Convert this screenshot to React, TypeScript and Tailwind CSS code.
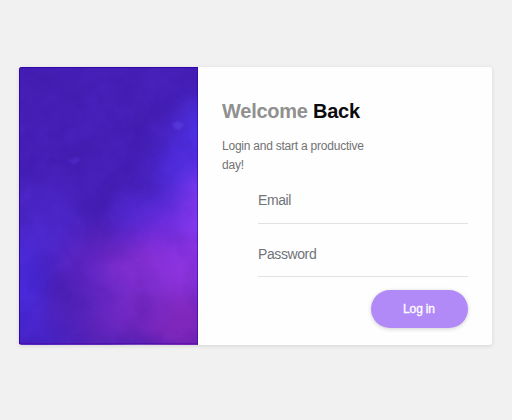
import React from "react";

function Artwork() {
  return (
    <svg className="block h-full w-full" viewBox="0 0 179 278" preserveAspectRatio="none" aria-hidden="true">
      <defs>
        <filter id="soft" x="-80%" y="-80%" width="260%" height="260%" colorInterpolationFilters="sRGB">
          <feGaussianBlur stdDeviation="13" />
        </filter>
        <filter id="small" x="-60%" y="-60%" width="220%" height="220%" colorInterpolationFilters="sRGB">
          <feGaussianBlur stdDeviation="1.3" />
        </filter>
        <filter id="dark" x="0" y="0" width="100%" height="100%" colorInterpolationFilters="sRGB">
          <feTurbulence type="fractalNoise" baseFrequency="0.03" numOctaves="5" seed="8" />
          <feColorMatrix values="0 0 0 0 0.14  0 0 0 0 0.05  0 0 0 0 0.45  2 0 0 0 -0.85" />
        </filter>
        <filter id="light" x="0" y="0" width="100%" height="100%" colorInterpolationFilters="sRGB">
          <feTurbulence type="fractalNoise" baseFrequency="0.035" numOctaves="5" seed="21" />
          <feColorMatrix values="0 0 0 0 0.42  0 0 0 0 0.25  0 0 0 0 0.95  0 2 0 0 -0.85" />
        </filter>
      </defs>
      <rect width="179" height="278" fill="#461fb7" />
      <g filter="url(#soft)">
        <ellipse cx="182" cy="68" rx="24" ry="34" fill="#4c32e2" />
        <ellipse cx="167" cy="98" rx="30" ry="30" fill="#512fe2" />
        <ellipse cx="20" cy="160" rx="35" ry="40" fill="#4e28cc" />
        <ellipse cx="85" cy="205" rx="42" ry="42" fill="#6025c2" />
        <ellipse cx="135" cy="148" rx="38" ry="20" fill="#552bd8" />
        <ellipse cx="152" cy="172" rx="34" ry="25" fill="#752de0" />
        <ellipse cx="190" cy="142" rx="28" ry="40" fill="#873bf0" />
        <ellipse cx="130" cy="202" rx="44" ry="30" fill="#8630d4" />
        <ellipse cx="176" cy="205" rx="34" ry="34" fill="#8e34e0" />
        <ellipse cx="2" cy="222" rx="22" ry="46" fill="#482bdc" />
        <ellipse cx="54" cy="248" rx="28" ry="30" fill="#5122b8" />
        <ellipse cx="125" cy="250" rx="50" ry="26" fill="#7228c0" />
        <ellipse cx="168" cy="262" rx="40" ry="34" fill="#7f27bb" />
        <ellipse cx="20" cy="276" rx="38" ry="18" fill="#4824c8" />
        <ellipse cx="80" cy="280" rx="28" ry="14" fill="#5822b4" />
      </g>
      <rect width="179" height="278" filter="url(#dark)" opacity="0.14" />
      <rect width="179" height="278" filter="url(#light)" opacity="0.13" />
      <path d="M153 57l6-3 6 4-5 5-5-2z" fill="#6550f0" opacity=".4" filter="url(#small)" />
      <path d="M48 94l10-4 3 3-6 5z" fill="#5c32dc" opacity=".4" filter="url(#small)" />
      <path d="M.5 0v278M0 .5h179" stroke="#3008a8" strokeWidth="1" fill="none" />
      <path d="M0 277.2h179" stroke="#4c00a5" strokeWidth="1" opacity=".65" />
      <path d="M178.5 0v278" stroke="#2600a5" strokeWidth="1" />
    </svg>
  );
}

function Field({ label, type }: { label: string; type: string }) {
  return (
    <input
      type={type}
      placeholder={label}
      aria-label={label}
      className="block h-[39px] w-full rounded-none border-b border-[#e2e2e4] bg-transparent p-0 pb-[7px] text-[14px] tracking-[-0.4px] text-[#495057] outline-none placeholder:text-[#6f7479] placeholder:opacity-100"
    />
  );
}

export default function App() {
  return (
    <main className="flex h-[420px] w-[512px] flex-col bg-[#f1f1f1] pt-[67px] pl-[18.5px] font-['Liberation_Sans',Arial,sans-serif]">
      <section className="flex h-[277.5px] w-[473.5px] overflow-hidden rounded-[3px] bg-[#fefefe] shadow-[0_1px_4px_rgba(0,0,0,0.12)]">
        <div className="w-[179.5px] shrink-0">
          <Artwork />
        </div>
        <div className="flex w-[294px] flex-col pt-[31px] pr-[24.5px] pl-[24px]">
          <h1 className="text-[20px] leading-[26px] font-bold tracking-[-0.25px] text-[#0b0b0d]">
            <span className="text-[#909090]">Welcome</span> Back
          </h1>
          <p className="mt-[13px] w-[150px] text-[12px] leading-[18.5px] tracking-[-0.23px] text-[#727274]">
            Login and start a productive day!
          </p>
          <form className="ml-[36px] flex flex-col" onSubmit={(e) => e.preventDefault()}>
            <div className="flex h-[49.5px] flex-col justify-end">
              <Field label="Email" type="email" />
            </div>
            <div className="flex h-[53.5px] flex-col justify-end">
              <Field label="Password" type="password" />
            </div>
            <button className="mt-[13px] h-[38px] w-[97px] self-end rounded-full bg-[#b18af8] text-[12px] tracking-[-0.15px] text-white shadow-[0_1px_4px_rgba(0,0,0,0.18)] [-webkit-text-stroke:0.3px_white]">
              Log in
            </button>
          </form>
        </div>
      </section>
    </main>
  );
}
